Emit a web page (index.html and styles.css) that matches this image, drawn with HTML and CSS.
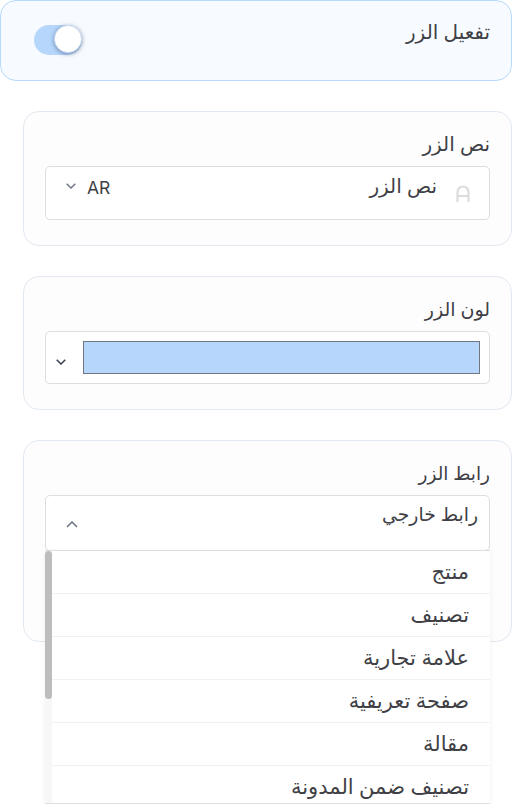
FILE: index.html
```html
<!DOCTYPE html>
<html lang="ar" dir="rtl">
<head>
<meta charset="utf-8">
<title>إعدادات الزر</title>
<link rel="stylesheet" href="styles.css">
</head>
<body>
<div class="page">
  <section class="enable">
    <span class="label">تفعيل الزر</span>
    <span class="toggle"><span class="knob"></span></span>
  </section>

  <section class="card card-text">
    <div class="label card-label">نص الزر</div>
    <div class="field field-text">
      <svg class="a-icon" viewBox="0 0 14 17" width="14" height="17" aria-hidden="true"><path d="M1.5 17V7a5.5 5.5 0 0 1 11 0v10M1.5 11h11" fill="none" stroke="#dcdcdc" stroke-width="2.2"/></svg>
      <span class="value">نص الزر</span>
      <span class="lang"><span class="lang-code">AR</span>
        <svg class="chev" viewBox="0 0 10 6" width="10" height="6" aria-hidden="true"><path d="M.7.7 5 5 9.3.7" fill="none" stroke="#6b7280" stroke-width="1.4"/></svg>
      </span>
    </div>
  </section>

  <section class="card card-color">
    <div class="label card-label label-sm">لون الزر</div>
    <div class="field field-color">
      <span class="swatch"></span>
      <svg class="chev" viewBox="0 0 10 6" width="10" height="6" aria-hidden="true"><path d="M.7.7 5 5 9.3.7" fill="none" stroke="#374151" stroke-width="1.5"/></svg>
    </div>
  </section>

  <section class="card card-link">
    <div class="label card-label label-xs">رابط الزر</div>
    <div class="field field-link">
      <span class="value value-sm">رابط خارجي</span>
      <svg class="chev-up" viewBox="0 0 12 7" width="12" height="7" aria-hidden="true"><path d="M1 6l5-5 5 5" fill="none" stroke="#6b7280" stroke-width="1.5"/></svg>
    </div>
    <div class="menu">
      <ul class="options">
        <li>منتج</li>
        <li>تصنيف</li>
        <li>علامة تجارية</li>
        <li>صفحة تعريفية</li>
        <li>مقالة</li>
        <li>تصنيف ضمن المدونة</li>
      </ul>
      <div class="scrolltrack"><div class="scrollthumb"></div></div>
    </div>
  </section>
</div>
</body>
</html>
```

FILE: styles.css
```css
* { box-sizing: border-box; }
html, body { margin: 0; padding: 0; background: #fff; }
body {
  height: 804px;
  overflow: hidden;
  font-family: "Noto Sans", "DejaVu Sans", sans-serif;
  color: #3f3f46;
}
.page { display: flex; flex-direction: column; }
.label { font-size: 20px; line-height: 26px; color: #3f3f46; }
.label-sm { font-size: 19px; }
.label-xs { font-size: 18.5px; }
.enable {
  height: 81px;
  background: #f7fbff;
  border: 1px solid #b8d9fb;
  border-radius: 16px;
  padding: 18px 21px 0 33px;
  display: flex;
  justify-content: space-between;
  align-items: flex-start;
}
.toggle {
  width: 48px;
  height: 30px;
  margin-top: 6px;
  background: #b6d7fb;
  border-radius: 15px;
  position: relative;
  display: block;
}
.knob {
  position: absolute;
  left: 20px;
  top: 0;
  width: 28px;
  height: 28px;
  border-radius: 50%;
  background: #fff;
  border: 1px solid #cfe0f4;
  box-shadow: 0 1px 4px rgba(60, 80, 120, .6);
}
.card {
  margin: 30px 0 0 23px;
  width: 489px;
  background: #fdfdfe;
  border: 1px solid #e2e8f0;
  border-radius: 16px;
  padding: 19px 21px 25px 21px;
}
.card-label { height: 35px; }
.field {
  background: #fff;
  border: 1px solid #dedede;
  border-radius: 5px;
  display: flex;
  align-items: flex-start;
}
.field-text { height: 54px; padding: 0 19px 0 20px; }
.a-icon { margin-top: 18px; margin-left: 19px; flex: none; }
.value { font-size: 20px; line-height: 26px; margin-top: 6px; }
.value-sm { font-size: 18.8px; }
.lang { margin-right: auto; display: flex; align-items: center; gap: 11px; margin-top: 7px; height: 26px; }
.lang-code { font-family: Inter, sans-serif; font-size: 17.5px; }
.lang .chev { margin-top: -2px; }
.field-color { height: 53px; padding: 9px 9px 0 10px; justify-content: space-between; }
.swatch { width: 397px; height: 33px; background: #b6d7fb; border: 1px solid #6f7680; display: block; }
.field-color .chev { margin-top: 18px; }
.field-link { height: 56px; padding: 0 11px 0 20px; justify-content: space-between; }
.field-link .value { margin-top: 5px; }
.chev-up { margin-top: 25px; }
.card-link { height: 202px; position: relative; }
.menu {
  position: absolute;
  top: 109px;
  left: 21px;
  width: 445px;
  height: 254px;
  display: flex;
  background: #fff;
  border-top: 1px solid #dedede;
  border-bottom: 1px solid #dedede;
  box-shadow: 0 2px 6px rgba(0,0,0,.06);
  overflow: hidden;
}
.options { list-style: none; margin: 0; padding: 0; flex: 1; }
.options li {
  height: 43px;
  padding: 0 21px;
  font-size: 21px;
  line-height: 41px;
  border-bottom: 1px solid #f1f1f1;
}
.options li:last-child { border-bottom: 0; }
.scrolltrack { width: 7px; background: #f7f7f7; flex: none; }
.scrollthumb { height: 148px; background: #bdbdbd; border-radius: 4px; }
```
